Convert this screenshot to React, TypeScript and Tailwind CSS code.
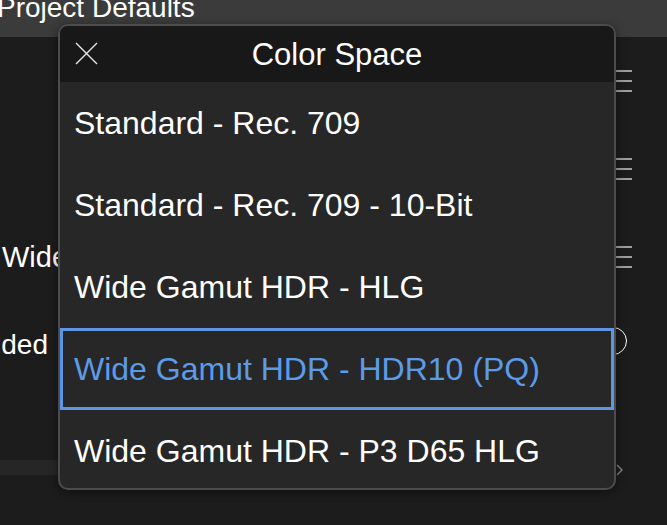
import React from "react";

const OPTIONS = [
  "Standard - Rec. 709",
  "Standard - Rec. 709 - 10-Bit",
  "Wide Gamut HDR - HLG",
  "Wide Gamut HDR - HDR10 (PQ)",
  "Wide Gamut HDR - P3 D65 HLG",
];
const SELECTED = 3;

function Handle() {
  return (
    <svg width="24" height="22" viewBox="0 0 24 22" className="text-[#c8c8c8]">
      <path d="M0 1h24M0 11h24M0 21h24" stroke="currentColor" strokeWidth="1.5" />
    </svg>
  );
}

function BackgroundSettings() {
  return (
    <div className="flex h-full flex-col bg-[#1c1c1c]">
      <div className="h-[37px] shrink-0 overflow-hidden bg-[#3b3b3b]">
        <div className="-ml-[3px] -mt-[6px] text-[28px] leading-none text-white">Project Defaults</div>
      </div>
      <div className="flex h-[88px] items-center justify-end pr-[35px]">
        <Handle />
      </div>
      <div className="flex h-[88px] items-center justify-end pr-[35px]">
        <Handle />
      </div>
      <div className="flex h-[88px] items-center justify-between pr-[35px]">
        <span className="ml-[2px] text-[29px] leading-none text-white">Wide Gamut HDR</span>
        <Handle />
      </div>
      <div className="flex h-[84px] items-center justify-between pr-[40px]">
        <div className="flex w-[48px] justify-end whitespace-nowrap">
          <span className="mt-[4px] text-[28px] leading-none text-white">Embedded</span>
        </div>
        <div className="-mt-[4px] h-[28px] w-[28px] rounded-full border-[1.5px] border-white" />
      </div>
      <div className="h-[75px]" />
      <div className="flex h-[15px] items-center justify-between pr-[44px]">
        <div className="h-full w-[300px] bg-[#262626]" />
        <svg width="7" height="12" viewBox="0 0 7 12" className="mt-[5px] text-[#8a8a8a]">
          <path d="M1 1l5 5-5 5" fill="none" stroke="currentColor" strokeWidth="1.3" />
        </svg>
      </div>
      <div className="flex-1" />
    </div>
  );
}

function ColorSpacePicker() {
  return (
    <div className="absolute left-[58px] top-[24px] flex h-[466px] w-[558px] flex-col overflow-hidden rounded-[10px] border-2 border-[#4c4c4c] bg-[#272727] shadow-[0_2px_10px_rgba(0,0,0,0.45)]">
      <div className="relative flex h-[56px] shrink-0 items-center justify-center bg-[#181818]">
        <svg
          width="23"
          height="23"
          viewBox="0 0 23 23"
          className="absolute left-[15px] top-[16px] text-[#e6e6e6]"
        >
          <path d="M1 1l21 21M22 1L1 22" stroke="currentColor" strokeWidth="1.4" />
        </svg>
        <span className="text-[31px] leading-none text-white">Color Space</span>
      </div>
      {OPTIONS.map((opt, i) => (
        <div
          key={opt}
          className={
            i === SELECTED
              ? "flex h-[82px] shrink-0 items-center border-[3px] border-[#5d97e3] pl-[11px] text-[32px] leading-none text-[#5c9be8]"
              : i === OPTIONS.length - 1
              ? "flex flex-1 items-center pl-[14px] pt-[3px] text-[32px] leading-none text-white"
              : "flex h-[82px] shrink-0 items-center pl-[14px] text-[32px] leading-none text-white"
          }
        >
          {opt}
        </div>
      ))}
    </div>
  );
}

export default function App() {
  return (
    <div className="relative h-[525px] w-[667px] overflow-hidden font-['Liberation_Sans',Arial,sans-serif]">
      <BackgroundSettings />
      <ColorSpacePicker />
    </div>
  );
}
